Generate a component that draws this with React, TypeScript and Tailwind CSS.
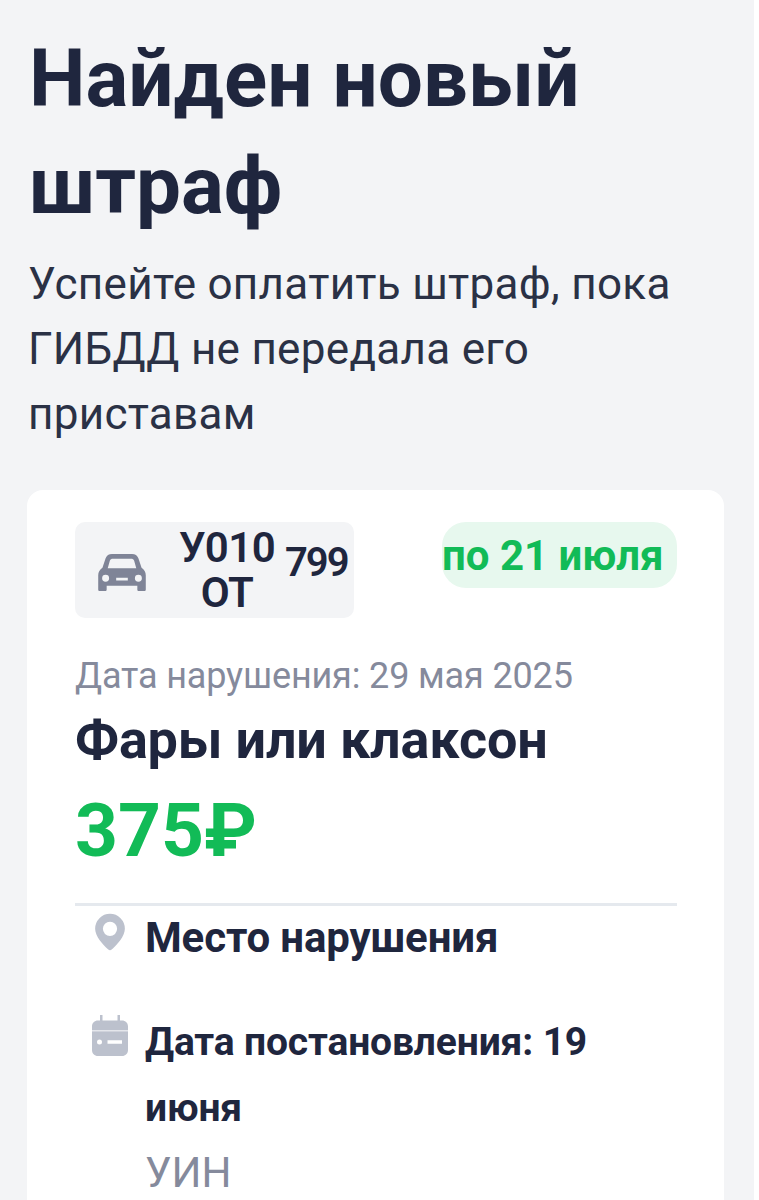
const pin =
  "M12 1.500a9 9 0 0 1 9 9c0 4.500-4.800 9.800-7.800 12.500a1.800 1.800 0 0 1-2.400 0C7.800 20.300 3 15 3 10.500a9 9 0 0 1 9-9Zm0 4.800a4.300 4.300 0 1 0 0 8.600 4.300 4.300 0 0 0 0-8.600Z";

function CarIcon() {
  return (
    <svg width="48" height="37" viewBox="0 0 45 35" className="mt-[4px] shrink-0" fill="#7f8497">
      <path
        fillRule="evenodd"
        d="M13 0h19c3 0 5 1.500 6 4l3 9c2.500 2 4 4 4 7v13.500c0 1-.5 1.500-1.500 1.500h-5c-1 0-1.500-.5-1.500-1.500V30H8v3.500C8 34.500 7.500 35 6.500 35h-5C.5 35 0 34.500 0 33.500V20c0-3 1.500-5 4-7l3-9c1-2.500 3-4 6-4Zm1 4.500c-1.500 0-2.500.5-3 2l-2 7h27l-2-7c-.5-1.500-1.500-2-3-2H14ZM7 19.700a3.300 3.300 0 1 0 0 6.600 3.300 3.300 0 0 0 0-6.600Zm31 0a3.300 3.300 0 1 0 0 6.600 3.300 3.300 0 0 0 0-6.600ZM17 22.500V25h11v-2.500H17Z"
      />
    </svg>
  );
}

function CalendarIcon() {
  return (
    <svg width="38" height="42" viewBox="0 0 38 42" fill="#bcc1cd">
      <path
        fillRule="evenodd"
        d="M9 0h2.500v5.500h15V0H29v5.500h2c3.500 0 6 2.500 6 6V35c0 3.500-2.500 6-6 6H7c-3.500 0-6-2.500-6-6V11.500c0-3.500 2.500-6 6-6h2V0Zm-.500 24.500a2.500 2.500 0 1 0 0 5 2.500 2.500 0 0 0 0-5Zm8 .7v3.600H31v-3.600H16.500Z"
      />
      <rect x="1" y="15" width="36" height="1.500" fill="#e4e6eb" />
    </svg>
  );
}

export default function App() {
  return (
    <div className="w-[759px] h-[1200px] overflow-hidden bg-white font-['Roboto',sans-serif]">
      <div className="w-[754px] h-[1200px] bg-[#f3f4f6] pl-[27px] pr-[30px] pt-[26px]">
        <h1 className="pl-[2px] text-[80px] leading-[107px] font-bold text-[#1f263e]">
          Найден новый штраф
        </h1>
        <p className="mt-[12px] pl-[1px] w-[670px] text-[44px] leading-[65px] text-[#2a3145] tracking-[0.3px]">
          Успейте оплатить штраф, пока ГИБДД не передала его приставам
        </p>
        <div className="mt-[43px] h-[760px] rounded-[16px] bg-white pl-[48px] pr-[47px] pt-[32px]">
          <div className="flex items-start justify-between">
            <div className="flex h-[96px] w-[279px] items-center rounded-[10px] bg-[#f3f4f6] pl-[23px]">
              <CarIcon />
              <div className="ml-[31px] w-[100px] text-center text-[42px] leading-[45px] font-semibold tracking-[-0.6px] text-[#1f263e]">
                <div>У010</div>
                <div>ОТ</div>
              </div>
              <span className="ml-[8px] mb-[14px] text-[40px] font-semibold leading-none tracking-[-2px] text-[#1f263e]">
                799
              </span>
            </div>
            <div className="flex h-[66px] w-[235px] items-center rounded-[24px] bg-[#e7f8ee] text-[42px] font-bold text-[#12bb57]">
              по 21 июля
            </div>
          </div>
          <div className="mt-[34px] text-[36px] leading-[48px] tracking-[-0.15px] text-[#858a9c]">
            Дата нарушения: 29 мая 2025
          </div>
          <div className="mt-[10px] text-[54px] leading-[60px] tracking-[-0.2px] font-bold text-[#1f263e]">
            Фары или клаксон
          </div>
          <div className="mt-[18px] text-[75px] leading-[84px] font-bold text-[#12bb57]">
            375₽
          </div>
          <div className="mt-[31px] border-t-[3px] border-[#e5e9ee]" />
          <div className="mt-[1px] flex items-start gap-[18px] pl-[18px]">
            <svg width="34" height="38" viewBox="2 1 20 23" fill="#bcc1cd" className="mt-[6px] shrink-0">
              <path fillRule="evenodd" d={pin} />
            </svg>
            <div className="text-[42px] leading-[54px] tracking-[-0.15px] font-bold text-[#1f263e] mt-[4px]">Место нарушения</div>
          </div>
          <div className="mt-[49px] flex items-start gap-[16px] pl-[16px]">
            <div className="shrink-0 pt-[1px]">
              <CalendarIcon />
            </div>
            <div className="w-[470px] mt-[-5px]">
              <div className="text-[39px] leading-[66px] tracking-[-0.15px] font-bold text-[#1f263e]">
                Дата постановления: 19 июня
              </div>
              <div className="text-[42px] leading-[63px] text-[#858a9c]">УИН</div>
            </div>
          </div>
        </div>
      </div>
    </div>
  );
}
